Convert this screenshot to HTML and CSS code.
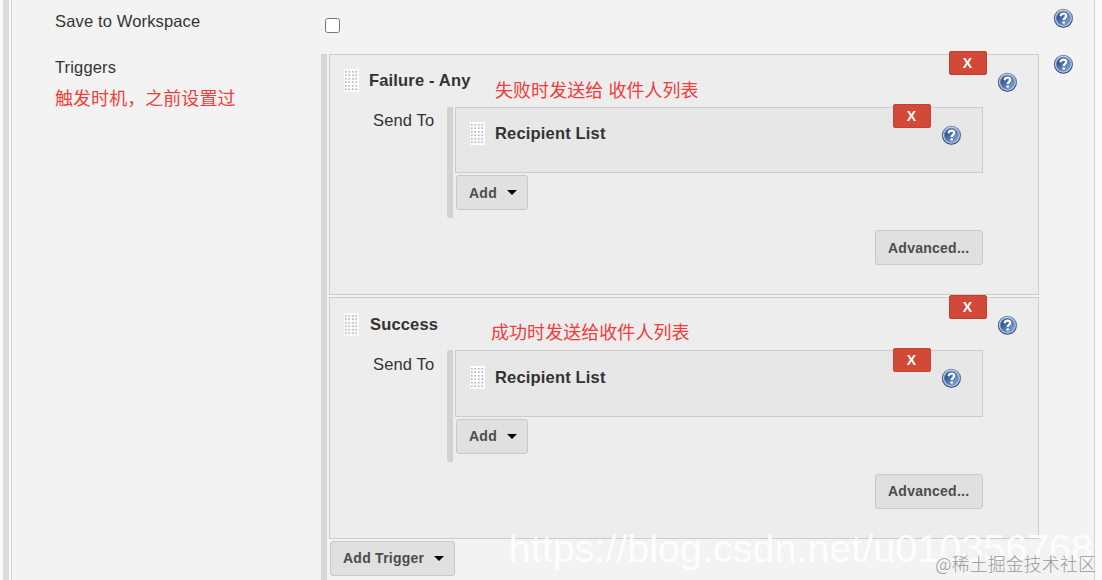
FILE: index.html
```html
<!DOCTYPE html>
<html lang="en">
<head>
    <meta charset="UTF-8" />
    <title>Editable Email Notification</title>
    <link rel="stylesheet" href="styles.css">
</head>
<body>
    <!-- shared icons -->
    <svg class="defs" width="0" height="0">
        <defs>
            <linearGradient id="ball" x1="0" y1="0" x2="1" y2="1">
                <stop offset="0.25" stop-color="#2f5596" />
                <stop offset="1" stop-color="#91b3dc" />
            </linearGradient>
            <linearGradient id="rim" x1="0" y1="0" x2="0" y2="1">
                <stop offset="0" stop-color="#7088b2" />
                <stop offset="1" stop-color="#243f78" />
            </linearGradient>
        </defs>
        <symbol id="help" viewBox="0 0 20 20">
            <circle cx="10.4" cy="10.3" r="9" fill="#c3d2e6" stroke="url(#rim)" stroke-width="1.1" />
            <circle cx="10.4" cy="10.3" r="7" fill="url(#ball)" stroke="#6484b5" stroke-width="0.6" />
            <path d="M7.6 8.2C7.7 6.4 8.9 5.6 10.5 5.6c1.7 0 2.7 0.9 2.7 2.2 0 1.9-2.5 2.1-2.5 4.1" fill="none" stroke="#fff" stroke-width="2.3" />
            <circle cx="10.7" cy="14.5" r="1.3" fill="#fff" />
        </symbol>
    </svg>
    <div class="rail"></div>
    <main class="panel">
        <section class="row save">
            <label for="save">Save to Workspace</label>
            <div class="setting"><input type="checkbox" id="save"></div>
            <svg class="help"><use href="#help" /></svg>
        </section>
        <section class="row triggers">
            <div class="label">
                Triggers
                <p class="note">触发时机，之前设置过</p>
            </div>
            <div class="setting list">
                <article class="trigger">
                    <button class="delete">X</button>
                    <svg class="help inner"><use href="#help" /></svg>
                    <h2><i class="grip"></i>Failure - Any</h2>
                    <p class="note over first">失败时发送给 收件人列表</p>
                    <div class="send">
                        <span class="send-label">Send To</span>
                        <div class="recipients">
                            <div class="recipient">
                                <button class="delete">X</button>
                                <svg class="help inner"><use href="#help" /></svg>
                                <h3><i class="grip"></i>Recipient List</h3>
                            </div>
                            <button class="btn">Add <i class="caret"></i></button>
                        </div>
                    </div>
                    <button class="btn advanced">Advanced...</button>
                </article>
                <article class="trigger second">
                    <button class="delete">X</button>
                    <svg class="help inner"><use href="#help" /></svg>
                    <h2><i class="grip"></i>Success</h2>
                    <p class="note over last">成功时发送给收件人列表</p>
                    <div class="send">
                        <span class="send-label">Send To</span>
                        <div class="recipients">
                            <div class="recipient">
                                <button class="delete">X</button>
                                <svg class="help inner"><use href="#help" /></svg>
                                <h3><i class="grip"></i>Recipient List</h3>
                            </div>
                            <button class="btn">Add <i class="caret"></i></button>
                        </div>
                    </div>
                    <button class="btn advanced">Advanced...</button>
                </article>
                <button class="btn add-trigger">Add Trigger <i class="caret"></i></button>
            </div>
            <svg class="help"><use href="#help" /></svg>
        </section>
    </main>
    <p class="mark url">https://blog.csdn.net/u010356768</p>
    <p class="mark site">@稀土掘金技术社区</p>
</body>
</html>
```
FILE: styles.css
```css
* {
    margin: 0;
    padding: 0;
    box-sizing: border-box;
}
body {
    position: relative;
    display: flex;
    gap: 2px;
    height: 580px;
    padding: 0 7px 0 3px;
    overflow: hidden;
    background-color: #fafafa;
    color: #333;
    font: 16.5px/20px "Liberation Sans", "Noto Sans CJK SC", sans-serif;
    letter-spacing: 0.15px;
}
.defs {
    position: absolute;
}
.rail {
    width: 6px;
    background-color: #dcdcdc;
}
.panel {
    flex: 1;
    height: 580px;
    overflow: hidden;
    border: solid #d2d2d2;
    border-width: 0 1px;
    background-color: #f3f3f3;
}
.row {
    display: grid;
    grid-template-columns: 266px 732px 20px;
    padding-left: 43px;
}
.save {
    height: 54px;
    padding-top: 11px;
}
.save > .help {
    margin-top: -3px;
}
.save input {
    display: block;
    width: 15px;
    height: 15px;
    margin: 7px 0 0 4px;
}
.label {
    padding-top: 3px;
}
.note {
    color: #f03c3c;
    font: 18px/26px "Noto Sans CJK SC", sans-serif;
    letter-spacing: 0.05px;
    white-space: nowrap;
}
.label .note {
    margin-top: 7px;
}
.help {
    width: 20px;
    height: 20px;
}
.list {
    width: 718px;
    height: 540px;
    padding-left: 2px;
    border-left: 6px solid #d6d6d6;
}
.trigger {
    position: relative;
    height: 241px;
    margin-bottom: 2px;
    padding: 15px 55px 0 14px;
    border: 1px solid #ccc;
    background-color: #ededed;
}
.trigger.second {
    height: 242px;
    padding-top: 16px;
}
h2,
h3 {
    display: flex;
    align-items: center;
    gap: 10px;
    height: 20px;
    font-size: 16.5px;
    letter-spacing: 0.17px;
}
.second h2 {
    gap: 11px;
}
.grip {
    width: 15px;
    height: 23px;
    background: radial-gradient(circle, #bbb 0.8px, #fff 1.3px) 0 1px / 3.5px 3.5px;
}
.send {
    display: flex;
    justify-content: space-between;
    margin-top: 17px;
    padding-left: 29px;
}
.second .send {
    margin-top: 16px;
}
.send-label {
    padding-top: 3px;
}
.second .send-label {
    padding-top: 4px;
}
.recipients {
    width: 536px;
    height: 111px;
    padding-left: 2px;
    border-left: 6px solid #d2d2d2;
    border-radius: 2px;
}
.second .recipients {
    height: 112px;
}
.recipient {
    position: relative;
    height: 66px;
    margin-bottom: 2px;
    padding: 15px 0 0 14px;
    border: 1px solid #ccc;
    background-color: #e7e7e7;
}
.second .recipient {
    height: 67px;
    padding-top: 16px;
}
.btn {
    display: flex;
    align-items: center;
    height: 35px;
    padding: 0 12px;
    border: 1px solid #c9c9c9;
    border-radius: 3px;
    background-color: #e0e0e0;
    color: #4c4c4c;
    font: bold 14px/20px "Liberation Sans", sans-serif;
    letter-spacing: 0.25px;
}
.recipients .btn {
    width: 72px;
    margin-left: 1px;
}
.second .btn,
.add-trigger {
    padding-bottom: 1px;
}
.caret {
    margin-left: auto;
    margin-right: -2px;
    border: 5px solid transparent;
    border-top-color: #000;
    border-bottom: 0;
}
.advanced {
    width: 108px;
    margin: 12px 0 0 auto;
}
.add-trigger {
    width: 125px;
    margin-left: 1px;
}
/* sits over the top border of its box */
.delete {
    position: absolute;
    top: -4px;
    right: 51px;
    width: 38px;
    height: 24px;
    padding-right: 1px;
    border: 1px solid #c4402f;
    border-radius: 2px;
    background-color: #d24939;
    color: #fff;
    font: bold 14px/20px "Liberation Sans", sans-serif;
}
.second .delete {
    top: -3px;
}
.help.inner {
    position: absolute;
    top: 17px;
    right: 21px;
}
.note.over {
    position: absolute;
    left: 165px;
    top: 21px;
}
.note.first {
    word-spacing: 1px;
}
.note.last {
    left: 161px;
    top: 20px;
}
.mark {
    position: absolute;
    white-space: nowrap;
}
.url {
    right: 9px;
    top: 526px;
    color: rgba(255, 255, 255, 0.85);
    font-size: 39.5px;
    line-height: 44px;
    letter-spacing: 0;
}
.site {
    right: 6px;
    top: 550px;
    color: #999;
    font: 300 17.9px/26px "Noto Sans CJK SC", sans-serif;
}
```
